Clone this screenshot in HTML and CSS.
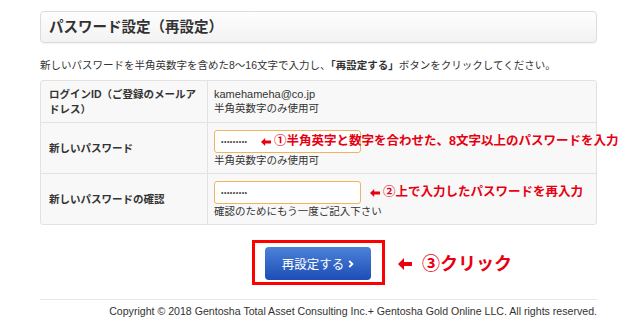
FILE: index.html
```html
<!DOCTYPE html>
<html lang="ja">
<head>
    <meta charset="UTF-8">
    <meta name="viewport" content="width=device-width, initial-scale=1.0">
    <title>パスワード設定（再設定）</title>
    <link rel="stylesheet" href="styles.css">
</head>
<body>
    <div class="page">
        <h1 class="title-box">パスワード設定（再設定）</h1>

        <p class="lead">新しいパスワードを半角英数字を含めた8〜16文字で入力し、<strong>「再設定する」</strong>ボタンをクリックしてください。</p>

        <div class="form-table">
            <div class="form-row">
                <div class="form-label">ログインID（ご登録のメールアドレス）</div>
                <div class="form-value">
                    <div class="latin">kamehameha@co.jp</div>
                    <div>半角英数字のみ使用可</div>
                </div>
            </div>
            <div class="form-row">
                <div class="form-label">新しいパスワード</div>
                <div class="form-value">
                    <div class="field">
                        <input type="password" class="pw-input" value="123456789" readonly>
                        <span class="note note-first">
                            <svg class="arrow" width="10" height="8" viewBox="0 0 10 8"><path d="M0 4 L4.2 0 L4.2 2.6 L10 2.6 L10 5.4 L4.2 5.4 L4.2 8 Z" fill="currentColor"/></svg>
                            ①半角英字と数字を合わせた、8文字以上のパスワードを入力
                        </span>
                    </div>
                    <div>半角英数字のみ使用可</div>
                </div>
            </div>
            <div class="form-row">
                <div class="form-label">新しいパスワードの確認</div>
                <div class="form-value">
                    <div class="field">
                        <input type="password" class="pw-input" value="123456789" readonly>
                        <span class="note note-second">
                            <svg class="arrow" width="10" height="8" viewBox="0 0 10 8"><path d="M0 4 L4.2 0 L4.2 2.6 L10 2.6 L10 5.4 L4.2 5.4 L4.2 8 Z" fill="currentColor"/></svg>
                            ②上で入力したパスワードを再入力
                        </span>
                    </div>
                    <div>確認のためにもう一度ご記入下さい</div>
                </div>
            </div>
        </div>

        <div class="submit-area">
            <div class="highlight">
                <button class="submit-btn">再設定する
                    <svg class="chevron" width="6" height="8" viewBox="0 0 6 8"><path d="M1.2 1 L4.4 4 L1.2 7" fill="none" stroke="#fff" stroke-width="1.8"/></svg>
                </button>
                <span class="note note-click">
                    <svg class="arrow" width="14" height="12" viewBox="0 0 14 12"><path d="M0 6 L6 0 L6 4 L14 4 L14 8 L6 8 L6 12 Z" fill="currentColor"/></svg>
                    ③クリック
                </span>
            </div>
        </div>

        <footer class="footer">Copyright © 2018 Gentosha Total Asset Consulting Inc.+ Gentosha Gold Online LLC. All rights reserved.</footer>
    </div>
</body>
</html>
```

FILE: styles.css
```css
:root {
    --text-color: #333;
    --border-color: #e2e2e2;
    --row-bg: #f8f8f8;
    --note-color: #e60012;
    --jp-font: "Liberation Sans", "Noto Sans CJK JP", sans-serif;
}

body {
    margin: 0;
    background: #fff;
    color: var(--text-color);
    font-family: var(--jp-font);
}

.page {
    width: 557px;
    padding: 11px 0 0 40px;
}

.title-box {
    margin: 0;
    height: 30px;
    line-height: 30px;
    padding-left: 8px;
    font-size: 14.5px;
    font-weight: bold;
    border: 1px solid #dcdcdc;
    border-radius: 4px;
    background: linear-gradient(#fefefe, #f2f2f2);
    box-shadow: 0 1px 1px rgba(0, 0, 0, 0.05);
}

.lead {
    margin: 14px 0 7px;
    font-size: 10.5px;
    line-height: 16px;
}

.form-table {
    border: 1px solid var(--border-color);
    border-radius: 3px;
    background: var(--row-bg);
    font-size: 10.5px;
    line-height: 14px;
}

.form-row {
    display: grid;
    grid-template-columns: 167px 1fr;
    border-top: 1px solid var(--border-color);
}

.form-row:first-child {
    border-top: none;
}

.form-label {
    display: flex;
    align-items: center;
    padding: 6px 8px;
    line-height: 14.5px;
    font-weight: bold;
    border-right: 1px solid var(--border-color);
}

.form-value {
    padding: 6px 6px;
}

.latin {
    font-size: 11px;
}

.field {
    position: relative;
    margin-top: 1px;
}

.pw-input {
    display: block;
    box-sizing: border-box;
    width: 147px;
    height: 23px;
    padding: 0 6px;
    border: 1px solid #efb460;
    border-radius: 3px;
    background: #fff;
    color: #444;
    font-size: 7px;
    letter-spacing: 0.5px;
    outline: none;
}

.note {
    position: absolute;
    display: flex;
    align-items: center;
    gap: 3px;
    color: var(--note-color);
    font-weight: bold;
    white-space: nowrap;
}

.note-first {
    left: 47px;
    top: 3px;
    font-size: 12.5px;
    line-height: 17px;
}

.note-second {
    left: 156px;
    top: 3px;
    font-size: 12.5px;
    line-height: 17px;
}

.submit-area {
    display: flex;
    justify-content: center;
    margin-top: 15px;
}

.highlight {
    position: relative;
    padding: 4px 11px 2px 10px;
    border: 3px solid #f00;
}

.submit-btn {
    display: flex;
    align-items: center;
    justify-content: center;
    gap: 4px;
    width: 106px;
    height: 33px;
    border: none;
    border-radius: 4px;
    background: linear-gradient(#4c82d8, #1d4db6);
    color: #fff;
    font-family: var(--jp-font);
    font-size: 12.5px;
}

.note-click {
    left: 143px;
    top: 9px;
    gap: 10px;
    font-size: 18px;
    line-height: 24px;
}

.footer {
    margin-top: 14px;
    border-top: 1px solid #e6e6e6;
    padding-top: 4px;
    text-align: right;
    font-size: 10.6px;
    line-height: 14px;
}
```
